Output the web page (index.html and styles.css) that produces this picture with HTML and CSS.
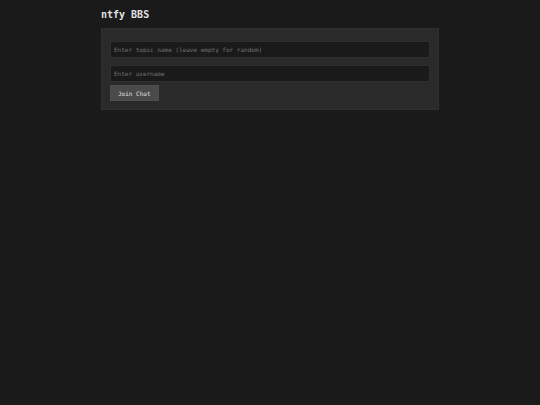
FILE: index.html
```
<!DOCTYPE html>
<html lang="en">
<head>
  <meta charset="UTF-8">
  <meta name="viewport" content="width=device-width, initial-scale=1.0">
  <title>ntfy BBS</title>
  <link rel="stylesheet" href="styles.css">
</head>
<body>
  <main class="container">
    <h1>ntfy BBS</h1>

    <form class="login" id="loginForm">
      <div class="fields">
        <input type="text" id="topic" aria-label="Topic name" placeholder="Enter topic name (leave empty for random)">
        <input type="text" id="username" aria-label="Username" placeholder="Enter username">
      </div>
      <button type="button" id="joinButton">Join Chat</button>
    </form>
  </main>
</body>
</html>
```

FILE: styles.css
```
* {
  box-sizing: border-box;
}

body {
  font-family: 'DejaVu Sans Mono', monospace;
  margin: 0;
  padding: 8px;
  background-color: #1a1a1a;
  color: #e0e0e0;
  font-size: 6px;
}

.container {
  max-width: 338px;
  margin: 0 auto;
}

h1 {
  margin: 0 0 6px;
  font-size: 10px;
  line-height: 14px;
}

.login {
  padding: 12px 8px 8px;
  background: #2a2a2a;
  border: 1px solid #303030;
}

.fields {
  display: flex;
  flex-direction: column;
  gap: 7px;
  margin-bottom: 3px;
}

input,
button {
  font-family: inherit;
  font-size: 6px;
}

input {
  width: 100%;
  height: 17px;
  padding: 3px;
  background: #1a1a1a;
  border: 1px solid #303030;
  border-radius: 0;
  color: #e0e0e0;
}

input::placeholder {
  color: #757575;
}

button {
  display: block;
  height: 16px;
  padding: 0 7px;
  background: #4a4a4a;
  border: 1px solid #4f4f4f;
  color: #e0e0e0;
  cursor: pointer;
}

button:hover {
  background: #5a5a5a;
}
```
